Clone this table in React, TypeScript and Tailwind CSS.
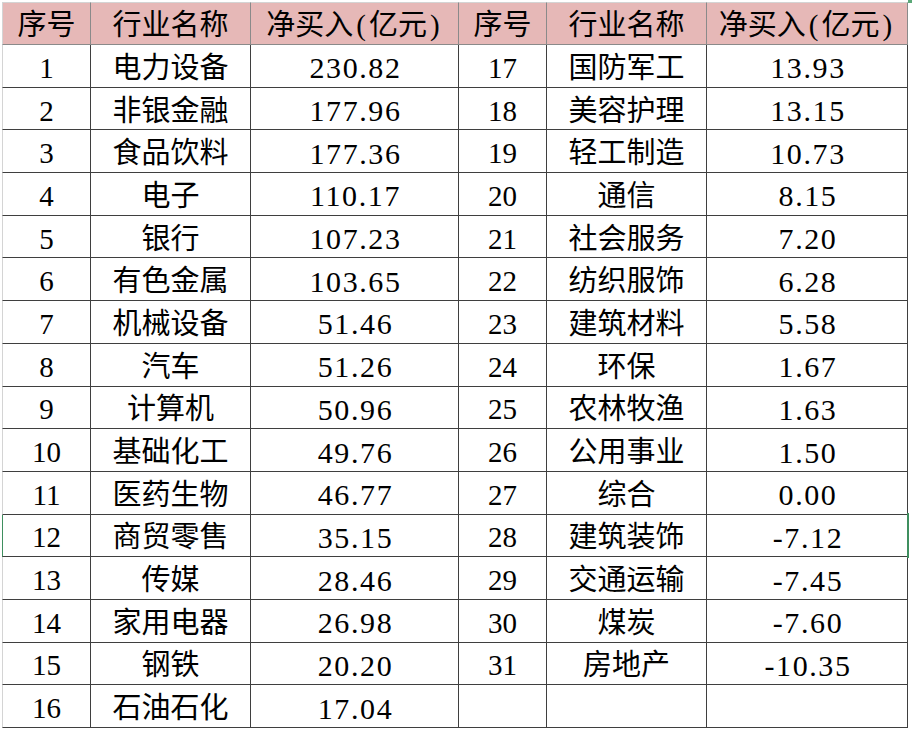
import React from "react";

const rows: [string, string, string, string, string, string][] = [
  ["1", "电力设备", "230.82", "17", "国防军工", "13.93"],
  ["2", "非银金融", "177.96", "18", "美容护理", "13.15"],
  ["3", "食品饮料", "177.36", "19", "轻工制造", "10.73"],
  ["4", "电子", "110.17", "20", "通信", "8.15"],
  ["5", "银行", "107.23", "21", "社会服务", "7.20"],
  ["6", "有色金属", "103.65", "22", "纺织服饰", "6.28"],
  ["7", "机械设备", "51.46", "23", "建筑材料", "5.58"],
  ["8", "汽车", "51.26", "24", "环保", "1.67"],
  ["9", "计算机", "50.96", "25", "农林牧渔", "1.63"],
  ["10", "基础化工", "49.76", "26", "公用事业", "1.50"],
  ["11", "医药生物", "46.77", "27", "综合", "0.00"],
  ["12", "商贸零售", "35.15", "28", "建筑装饰", "-7.12"],
  ["13", "传媒", "28.46", "29", "交通运输", "-7.45"],
  ["14", "家用电器", "26.98", "30", "煤炭", "-7.60"],
  ["15", "钢铁", "20.20", "31", "房地产", "-10.35"],
  ["16", "石油石化", "17.04", "", "", ""],
];

const headers = ["序号", "行业名称", "净买入(亿元)", "序号", "行业名称", "净买入(亿元)"];

function HeaderText({ text }: { text: string }) {
  // half-width parens get a bit of room, as in the spreadsheet font
  const parts = text.split(/([()])/);
  return (
    <span>
      {parts.map((p, i) =>
        p === "(" || p === ")" ? (
          <span key={i} className="mx-[3px]">
            {p}
          </span>
        ) : (
          <span key={i}>{p}</span>
        )
      )}
    </span>
  );
}

export default function App() {
  return (
    <div className="relative h-[732px] w-[912px] overflow-hidden bg-white pt-[2px] pl-[2px] font-['Liberation_Serif','Noto_Sans_CJK_SC',serif] text-[29px] text-black">
      <div className="grid w-[906px] grid-cols-[89px_160px_208px_88px_160px_201px]">
        {headers.map((h, i) => (
          <div
            key={i}
            className={`flex h-[43px] items-center justify-center border-t border-r border-b border-t-[#d4d4d4] border-r-[#8a8a8a] border-b-[#8a8a8a] bg-[#e6b8b7] pt-[3px] leading-none ${
              i === 0 ? "border-l border-l-[#d4d4d4]" : ""
            }`}
          >
            <HeaderText text={h} />
          </div>
        ))}
        {rows.map((r, ri) =>
          r.map((c, ci) => {
            const isNum = ci === 2 || ci === 5;
            return (
              <div
                key={`${ri}-${ci}`}
                className={`flex h-[42.7px] items-center justify-center border-r border-b border-[#3f3f3f] pt-[5px] leading-none ${
                  isNum ? "pl-[2px] text-[30px] tracking-[1.6px]" : ""
                } ${
                  ci === 0
                    ? ri === 11
                      ? "border-l border-l-[#3f8f5f]"
                      : "border-l border-l-[#d4d4d4]"
                    : ""
                }`}
              >
                {c}
              </div>
            );
          })
        )}
      </div>
      {/* excel selection outline on the neighbouring cell */}
      <div className="absolute left-[907px] top-[513px] h-[45px] w-[2px] bg-[#3f8f5f]" />
      <div className="absolute left-[908px] top-0 h-[3px] w-[4px] bg-[#5aa877]" />
    </div>
  );
}
